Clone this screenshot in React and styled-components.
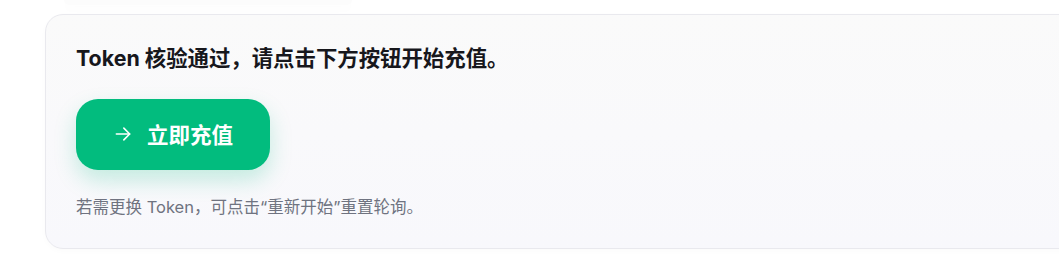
import React from "react";
import styled, { createGlobalStyle } from "styled-components";

const Global = createGlobalStyle`
  html, body { margin: 0; padding: 0; background: #ffffff; overflow: hidden; }
  body { font-family: Inter, "Noto Sans CJK SC", sans-serif; }
`;

const Page = styled.div`
  width: 1059px;
  height: 270px;
  display: flex;
  flex-direction: column;
  overflow: hidden;
`;

const PrevEdge = styled.div`
  height: 5px;
  margin-left: 64px;
  width: 288px;
  background: #fcfcfc;
  border-radius: 0 0 14px 14px;
  box-shadow: 0 4px 10px rgba(0, 0, 0, 0.018);
  flex-shrink: 0;
`;

const Card = styled.section`
  margin-top: 9px;
  margin-left: 45px;
  width: 1060px;
  flex-shrink: 0;
  box-sizing: border-box;
  border: 1px solid #e9e9ee;
  border-radius: 18px;
  background: linear-gradient(180deg, #fafafa 0%, #f8f8fc 100%);
  box-shadow: 0 2px 6px rgba(0, 0, 0, 0.02);
  padding: 28px 30px 28px 30px;
  display: flex;
  flex-direction: column;
  align-items: flex-start;
`;

const Title = styled.p`
  margin: 0;
  font-size: 21.4px;
  line-height: 31px;
  font-weight: 700;
  color: #17171c;
`;

const PayButton = styled.button`
  margin-top: 25px;
  width: 194px;
  height: 71px;
  border: none;
  border-radius: 22px;
  background: #02bc7e;
  color: #ffffff;
  font-family: Inter, "Noto Sans CJK SC", sans-serif;
  font-size: 21.5px;
  font-weight: 700;
  display: flex;
  align-items: center;
  justify-content: center;
  gap: 14px;
  padding: 0 0 2px 0;
  box-shadow: 0 10px 22px rgba(2, 188, 126, 0.22);
  cursor: pointer;
`;

const Note = styled.p`
  margin: 24px 0 0 0;
  font-size: 16.5px;
  line-height: 26px;
  color: #6f7380;
`;

const Arrow = () => (
  <svg width="20" height="20" viewBox="0 0 24 24" fill="none" stroke="currentColor" strokeWidth="1.9" strokeLinecap="round" strokeLinejoin="round">
    <path d="M4 12h16" />
    <path d="M13 5l7 7-7 7" />
  </svg>
);

export default function App() {
  return (
    <>
      <Global />
      <Page>
        <PrevEdge />
        <Card>
          <Title>Token 核验通过，请点击下方按钮开始充值。</Title>
          <PayButton>
            <Arrow />
            <span>立即充值</span>
          </PayButton>
          <Note>若需更换 Token，可点击“重新开始”重置轮询。</Note>
        </Card>
      </Page>
    </>
  );
}
